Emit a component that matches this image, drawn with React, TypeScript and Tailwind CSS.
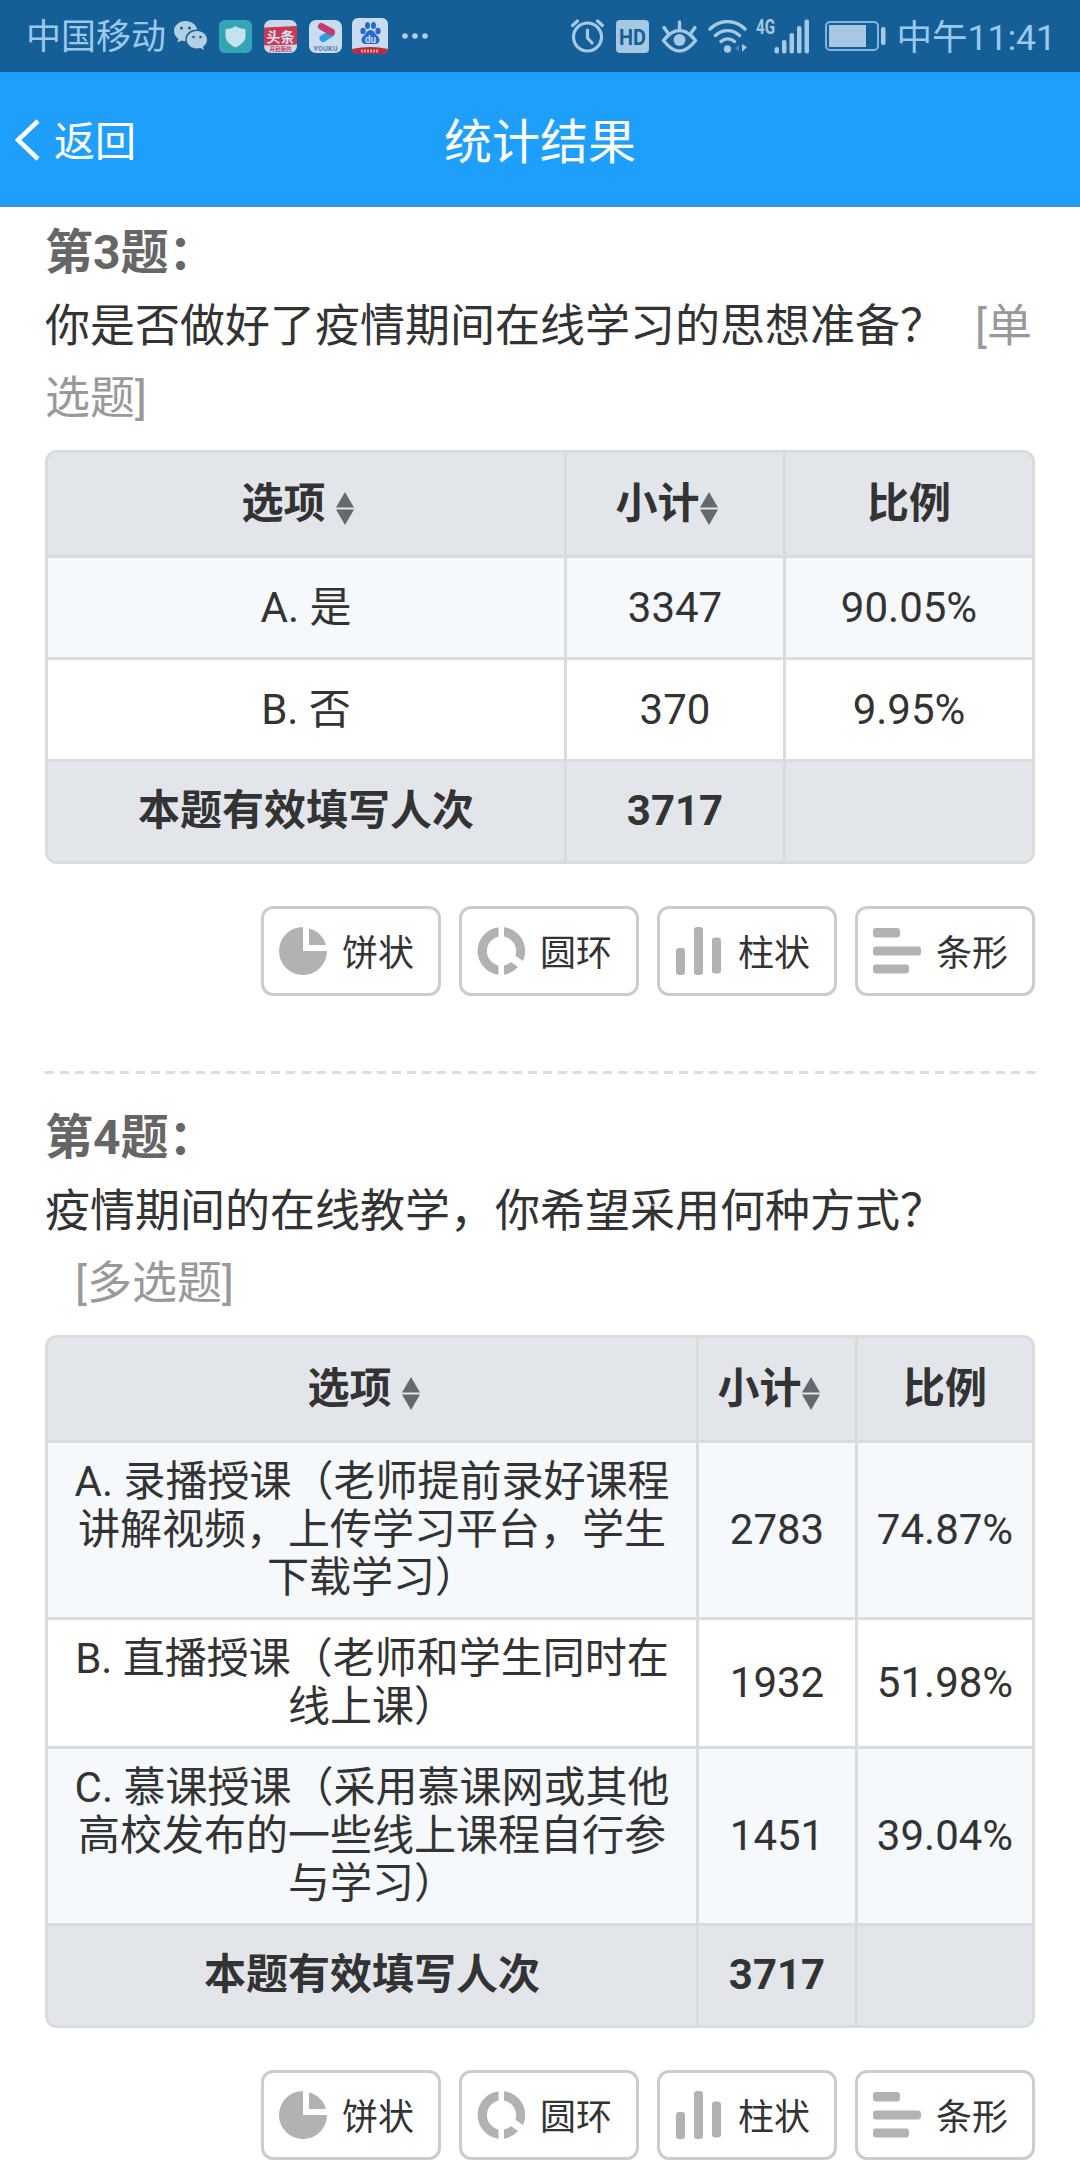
import type { ReactNode } from "react";

interface Option {
  label: string;
  count: number;
  ratio: string;
}

interface Question {
  id: number;
  title: string;
  type: ReactNode;
  total: number;
  columns: string;
  options: Option[];
}

const QUESTIONS: Question[] = [
  {
    id: 3,
    title: "你是否做好了疫情期间在线学习的思想准备？",
    type: (
      <>
        [单
        <br />
        选题]
      </>
    ),
    total: 3717,
    columns: "grid-cols-[519px_219px_1fr]",
    options: [
      { label: "A. 是", count: 3347, ratio: "90.05%" },
      { label: "B. 否", count: 370, ratio: "9.95%" },
    ],
  },
  {
    id: 4,
    title: "疫情期间的在线教学，你希望采用何种方式？",
    type: "[多选题]",
    total: 3717,
    columns: "grid-cols-[651px_159px_1fr]",
    options: [
      { label: "A. 录播授课（老师提前录好课程讲解视频，上传学习平台，学生下载学习）", count: 2783, ratio: "74.87%" },
      { label: "B. 直播授课（老师和学生同时在线上课）", count: 1932, ratio: "51.98%" },
      { label: "C. 慕课授课（采用慕课网或其他高校发布的一些线上课程自行参与学习）", count: 1451, ratio: "39.04%" },
    ],
  },
];

const CHARTS = [
  {
    label: "饼状",
    icon: (
      <>
        <path d="M24 0A24 24 0 1 0 48 24H24Z" />
        <path d="M30 1.5A23 23 0 0 1 47 18H30Z" />
      </>
    ),
  },
  {
    label: "圆环",
    icon: (
      <>
        <path d="M21.5 0.2A24 24 0 0 0 21.5 47.8V38.6A15 15 0 0 1 21.5 9.4Z" />
        <path d="M27 0.2A24 24 0 0 1 46 34L38.4 28.8A15 15 0 0 0 27 9.4Z" />
        <path d="M27 38.6A15 15 0 0 0 34 35L41 40A24 24 0 0 1 27 47.8Z" />
      </>
    ),
  },
  {
    label: "柱状",
    icon: (
      <>
        <rect x="1" y="21" width="9" height="27" rx="3" />
        <rect x="19" y="0" width="9" height="48" rx="3" />
        <rect x="37" y="10.5" width="9" height="36" rx="3" />
      </>
    ),
  },
  {
    label: "条形",
    icon: (
      <>
        <rect x="0" y="1" width="27" height="9.5" rx="3" />
        <rect x="0" y="19.5" width="48" height="9" rx="3" />
        <rect x="0" y="37.5" width="36" height="9" rx="3" />
      </>
    ),
  },
];

function StatusBar() {
  return (
    <div className="flex h-[72px] items-center justify-between bg-[#155f98] pl-[26px] pr-6 text-[#9cc8ec]">
      <div className="flex items-center">
        <span className="pt-1 text-[35px] leading-[68px]">中国移动</span>
        {/* WeChat */}
        <svg className="ml-2 h-[30px] w-[33px]" viewBox="0 0 33 30" fill="#b4cfe2">
          <path d="M11.5 0C5 0 0 4.500 0 10c0 3.300 1.700 6 4.400 7.900L3.300 21.500l4.200-2.100c1.300.4 2.500.5 4 .5C10.600 13 16 8.300 23.300 8.500 22.300 3.600 17.500 0 11.500 0Z" />
          <path d="M23 10c-5.700 0-10.200 3.900-10.200 8.700S17.300 27.400 23 27.400c1.200 0 2.300-.2 3.400-.5l3.600 2-1-3.200c2.500-1.700 4-4.100 4-7C33 13.900 28.500 10 23 10Z" />
          <g fill="#155f98">
            <circle cx="7.500" cy="7" r="1.500" />
            <circle cx="15.500" cy="7" r="1.500" />
            <circle cx="19.500" cy="16" r="1.300" />
            <circle cx="26.500" cy="16" r="1.300" />
          </g>
        </svg>
        {/* Security guard */}
        <svg className="ml-3 size-[33px]" viewBox="0 0 33 33">
          <rect width="33" height="33" rx="6" fill="#35a5b5" />
          <path d="M16.500 6c3 2.300 6 3 10 3v7c0 5-4.500 9-10 11.500C11 25 6.500 21 6.500 16V9c4 0 7-.7 10-3Z" fill="#c5e3ee" />
        </svg>
        {/* Toutiao */}
        <svg className="ml-3 size-[33px]" viewBox="0 0 33 33">
          <rect width="33" height="33" rx="7" fill="#c9d9ea" />
          <path d="M0 7.500 33 6v18.500L0 25.500Z" fill="#c93a56" />
          <text x="16.500" y="22" textAnchor="middle" fontSize="14" fontWeight="700" fill="#dbe4ee">头条</text>
          <text x="16.500" y="31" textAnchor="middle" fontSize="5.500" fontWeight="700" fill="#c93a56">开启新的</text>
        </svg>
        {/* Youku */}
        <svg className="ml-3 size-[33px]" viewBox="0 0 33 33">
          <rect width="33" height="33" rx="7" fill="#c9dcf0" />
          <path d="M14 18.500 22 13.500" stroke="#2aa0dc" strokeWidth="7" strokeLinecap="round" />
          <path d="M12.500 6.500 22.500 12" stroke="#c83b70" strokeWidth="7" strokeLinecap="round" />
          <text x="4.500" y="30.500" fontSize="7" fontWeight="700" fill="#5a7ba8" textLength="24">YOUKU</text>
        </svg>
        {/* Baidu */}
        <svg className="ml-2.5 size-9" viewBox="0 0 36 36">
          <rect width="36" height="36" rx="6" fill="#c9dcf0" />
          <g fill="#2868cc">
            <ellipse cx="11" cy="13" rx="2.600" ry="3.300" />
            <ellipse cx="15.500" cy="7.500" rx="2.500" ry="3.500" />
            <ellipse cx="21.500" cy="7.500" rx="2.500" ry="3.500" />
            <ellipse cx="26" cy="13" rx="2.600" ry="3.300" />
            <path d="M18.500 12c3.500 0 4.500 4 7 6 3.500 3 2 8-2 8h-10c-4 0-5.500-5-2-8 2.500-2 3.500-6 7-6Z" />
          </g>
          <text x="18.500" y="24.500" textAnchor="middle" fontSize="10" fontWeight="700" fill="#c9dcf0">du</text>
          <path d="M0 31q18-4 36 0-1 5-6 5H6q-5 0-6-5Z" fill="#bd2c3c" />
          <path d="M9 33h18" stroke="#dba29c" strokeWidth="3" strokeDasharray="2 1" />
        </svg>
        <svg className="ml-[14px] h-1.5 w-[26px]" viewBox="0 0 26 6" fill="#b4cfe2">
          <circle cx="3" cy="3" r="2.800" />
          <circle cx="13" cy="3" r="2.800" />
          <circle cx="23" cy="3" r="2.800" />
        </svg>
      </div>

      <div className="flex items-center">
        {/* Alarm */}
        <svg className="h-[34px] w-[33px]" viewBox="0 0 33 34" fill="none" stroke="#a6c8e2" strokeWidth="3.200" strokeLinecap="round">
          <circle cx="16.500" cy="18" r="14" />
          <path d="M16.500 11v8l4.500 5M1.500 6.500 6.500 2M31.500 6.500 26.500 2" />
        </svg>
        <svg className="ml-3 size-[33px]" viewBox="0 0 33 33">
          <rect width="33" height="33" rx="4" fill="#a6c8e2" />
          <text x="3" y="24.500" fontSize="22" fontWeight="700" fill="#155f98" textLength="27" lengthAdjust="spacingAndGlyphs">HD</text>
        </svg>
        {/* Eye comfort */}
        <svg className="ml-3 h-[33px] w-[37px]" viewBox="0 0 37 33" fill="none" stroke="#a6c8e2" strokeWidth="3.400" strokeLinecap="round">
          <path d="M2.500 20.500C9 12 13.500 10.500 18.500 10.500S28 12 34.500 20.500C28 29 23.500 31 18.500 31S9 29 2.500 20.500ZM18.500 2v7M3 7.500 7 13M34 7.500 30 13" />
          <circle cx="18.500" cy="20" r="6" fill="#a6c8e2" stroke="none" />
        </svg>
        {/* Wi-Fi */}
        <svg className="ml-2.5 h-[33px] w-10" viewBox="0 0 40 33" fill="none" stroke="#a6c8e2" strokeWidth="3.400" strokeLinecap="round">
          <path d="M2 9C12-1 27-1 37 9M7.500 15.500c7-6.500 17-6.500 24 0M13 21.500c4-3.500 9.500-3.500 13.500 0" />
          <circle cx="19.500" cy="29" r="3.700" fill="#a6c8e2" stroke="none" />
          <path d="M34 24v8l5-5Z" fill="#a6c8e2" stroke="none" />
          <path d="M31 25v7l-4-4Z" fill="#4b86b2" stroke="none" />
        </svg>
        {/* Mobile signal */}
        <svg className="ml-2 h-[51px] w-[54px]" viewBox="0 -8 54 51" fill="#a6c8e2">
          <text x="0" y="15" fontSize="21" fontWeight="700" textLength="19" lengthAdjust="spacingAndGlyphs">4G</text>
          <rect x="18.500" y="28" width="4.500" height="6.500" rx="2" />
          <rect x="26" y="21" width="4.500" height="13.500" rx="2" />
          <rect x="33.500" y="14" width="4.500" height="20.500" rx="2" />
          <rect x="41" y="7" width="4.500" height="27.500" rx="2" />
          <rect x="48.500" y="0.500" width="4.500" height="34" rx="2" />
        </svg>
        <svg className="ml-[15px] h-[30px] w-[61px]" viewBox="0 0 61 30">
          <rect x="1" y="1" width="52" height="28" rx="4" fill="none" stroke="#7fb6e0" strokeWidth="2" />
          <rect x="4" y="4" width="37" height="22" fill="#a6c8e2" />
          <rect x="56" y="6" width="4.500" height="18" rx="2" fill="#a6c8e2" />
        </svg>
        <span className="ml-[11px] pt-1 text-[35.5px] leading-[68px]">中午11:41</span>
      </div>
    </div>
  );
}

function NavBar() {
  return (
    <header className="grid h-[135px] grid-cols-[1fr_auto_1fr] items-center border-b-[3px] border-[#3a94dc] bg-[#1f9ffc] text-white">
      <button className="flex items-center pl-[14px] pt-[3px] text-[41px] leading-none">
        <svg className="h-[42px] w-[26px]" viewBox="0 0 26 42" fill="none" stroke="white" strokeWidth="4.500">
          <path d="M24 2 4 21l20 19" />
        </svg>
        <span className="ml-[14px] mt-1.5">返回</span>
      </button>
      <h1 className="pt-2.5 text-[48px] leading-none">统计结果</h1>
    </header>
  );
}

function SortIcon() {
  return (
    <svg className="mr-[17px] mt-2 h-[33px] w-[18px]" viewBox="0 0 18 33" fill="#66696b">
      <path d="M9 0 18 15.500H0Z" />
      <path d="M0 17.500h18L9 33Z" />
    </svg>
  );
}

const CELL = "flex items-center justify-center px-6 border-r-[3px] border-[#d9dcdf]";

function ResultTable({ question }: { question: Question }) {
  const row = `grid ${question.columns}`;
  return (
    <div className="mt-[15px] divide-y-[3px] divide-[#d9dcdf] overflow-hidden rounded-[12px] border-[3px] border-[#d9dcdf] text-center text-[42px] leading-[48px] text-[#333333]">
      <div className={`${row} h-[105px] bg-[#e2e6ea] font-bold`}>
        <div className={CELL}>
          <span className="mr-2.5">选项</span>
          <SortIcon />
        </div>
        <div className="flex items-center justify-center border-r-[3px] border-[#d9dcdf]">
          小计
          <SortIcon />
        </div>
        <div className="flex items-center justify-center">比例</div>
      </div>
      {question.options.map((option) => (
        <div key={option.label} className={`${row} min-h-[102px] bg-white even:bg-[#f5f9fc]`}>
          <div className={`${CELL} py-[15px]`}>{option.label}</div>
          <div className={CELL}>{option.count}</div>
          <div className="flex items-center justify-center">{option.ratio}</div>
        </div>
      ))}
      <div className={`${row} h-[99px] bg-[#e2e6ea] font-bold`}>
        <div className={`${CELL} pb-0.5`}>本题有效填写人次</div>
        <div className={`${CELL} pb-0.5`}>{question.total}</div>
        <div />
      </div>
    </div>
  );
}

function QuestionBlock({ question }: { question: Question }) {
  return (
    <section className="px-[45px]">
      <h2 className="text-[48px] font-bold leading-[72px] text-[#666666]">第{question.id}题：</h2>
      <p className="pt-0.5 text-[45px] leading-[72px] text-[#333333]">
        {question.title}
        {question.id === 4 && <br />}
        <span className="ml-[30px] text-[#999999]">{question.type}</span>
      </p>
      <ResultTable question={question} />
      <div className="mt-[42px] flex justify-end gap-[18px]">
        {CHARTS.map((chart) => (
          <button
            key={chart.label}
            className="flex h-[90px] w-[180px] items-center rounded-[12px] border-[3px] border-[#cccccc] bg-white pl-[15px] text-[36px] leading-none text-[#333333]"
          >
            <svg className="size-12" viewBox="0 0 48 48" fill="#b2b2b2">
              {chart.icon}
            </svg>
            <span className="ml-[15px] pt-1.5">{chart.label}</span>
          </button>
        ))}
      </div>
    </section>
  );
}

export default function App() {
  return (
    <div className="h-[2160px] w-[1080px] overflow-hidden bg-white font-[Roboto,'Noto_Sans_CJK_SC',sans-serif]">
      <StatusBar />
      <NavBar />
      <main className="pt-2.5">
        <QuestionBlock question={QUESTIONS[0]} />
        <div className="mx-[45px] mb-7 mt-[75px] h-[3px] bg-[repeating-linear-gradient(90deg,#dddddd_0_9px,transparent_9px_15.09px)]" />
        <QuestionBlock question={QUESTIONS[1]} />
      </main>
    </div>
  );
}
